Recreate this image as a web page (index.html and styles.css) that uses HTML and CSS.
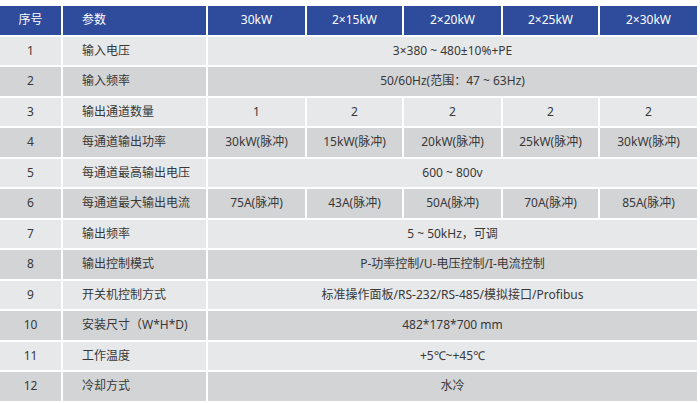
FILE: index.html
```html
<!DOCTYPE html>
<html lang="zh-CN">
<head>
<meta charset="utf-8">
<title>参数表</title>
<link rel="stylesheet" href="styles.css">
</head>
<body>
<div class="table">
  <div class="cell head">序号</div>
  <div class="cell head param">参数</div>
  <div class="cell head">30kW</div>
  <div class="cell head">2×15kW</div>
  <div class="cell head">2×20kW</div>
  <div class="cell head">2×25kW</div>
  <div class="cell head">2×30kW</div>

  <div class="cell light">1</div>
  <div class="cell light param">输入电压</div>
  <div class="cell light span5">3×380 ~ 480±10%+PE</div>

  <div class="cell dark">2</div>
  <div class="cell dark param">输入频率</div>
  <div class="cell dark span5">50/60Hz(范围：47 ~ 63Hz)</div>

  <div class="cell light">3</div>
  <div class="cell light param">输出通道数量</div>
  <div class="cell light">1</div>
  <div class="cell light">2</div>
  <div class="cell light">2</div>
  <div class="cell light">2</div>
  <div class="cell light">2</div>

  <div class="cell dark">4</div>
  <div class="cell dark param">每通道输出功率</div>
  <div class="cell dark">30kW(脉冲)</div>
  <div class="cell dark">15kW(脉冲)</div>
  <div class="cell dark">20kW(脉冲)</div>
  <div class="cell dark">25kW(脉冲)</div>
  <div class="cell dark">30kW(脉冲)</div>

  <div class="cell light">5</div>
  <div class="cell light param">每通道最高输出电压</div>
  <div class="cell light span5">600 ~ 800v</div>

  <div class="cell dark">6</div>
  <div class="cell dark param">每通道最大输出电流</div>
  <div class="cell dark">75A(脉冲)</div>
  <div class="cell dark">43A(脉冲)</div>
  <div class="cell dark">50A(脉冲)</div>
  <div class="cell dark">70A(脉冲)</div>
  <div class="cell dark">85A(脉冲)</div>

  <div class="cell light">7</div>
  <div class="cell light param">输出频率</div>
  <div class="cell light span5">5 ~ 50kHz，可调</div>

  <div class="cell dark">8</div>
  <div class="cell dark param">输出控制模式</div>
  <div class="cell dark span5">P-功率控制/U-电压控制/I-电流控制</div>

  <div class="cell light">9</div>
  <div class="cell light param">开关机控制方式</div>
  <div class="cell light span5">标准操作面板/RS-232/RS-485/模拟接口/Profibus</div>

  <div class="cell dark">10</div>
  <div class="cell dark param">安装尺寸（W*H*D)</div>
  <div class="cell dark span5">482*178*700 mm</div>

  <div class="cell light">11</div>
  <div class="cell light param">工作温度</div>
  <div class="cell light span5">+5℃~+45℃</div>

  <div class="cell dark">12</div>
  <div class="cell dark param">冷却方式</div>
  <div class="cell dark span5">水冷</div>
</div>
</body>
</html>
```

FILE: styles.css
```css
html, body {
  margin: 0;
  padding: 0;
  background: #ffffff;
}

body {
  font-family: "Noto Sans", "Noto Sans CJK SC", sans-serif;
  font-size: 12px;
  color: #383838;
}

.table {
  display: grid;
  grid-template-columns: 61px 143px 97px 95px 97px 95px 97px;
  grid-auto-rows: 28.5px;
  column-gap: 2px;
  row-gap: 2px;
  padding-top: 6px;
  width: 697px;
}

.cell {
  display: flex;
  align-items: center;
  justify-content: center;
  white-space: nowrap;
  line-height: 1;
}

.head {
  background: #2e4b9c;
  color: #ffffff;
}

.light {
  background: #e7e8ea;
}

.dark {
  background: #d3d4d6;
}

.param {
  justify-content: flex-start;
  padding-left: 19px;
}

.span5 {
  grid-column: span 5;
}
```
